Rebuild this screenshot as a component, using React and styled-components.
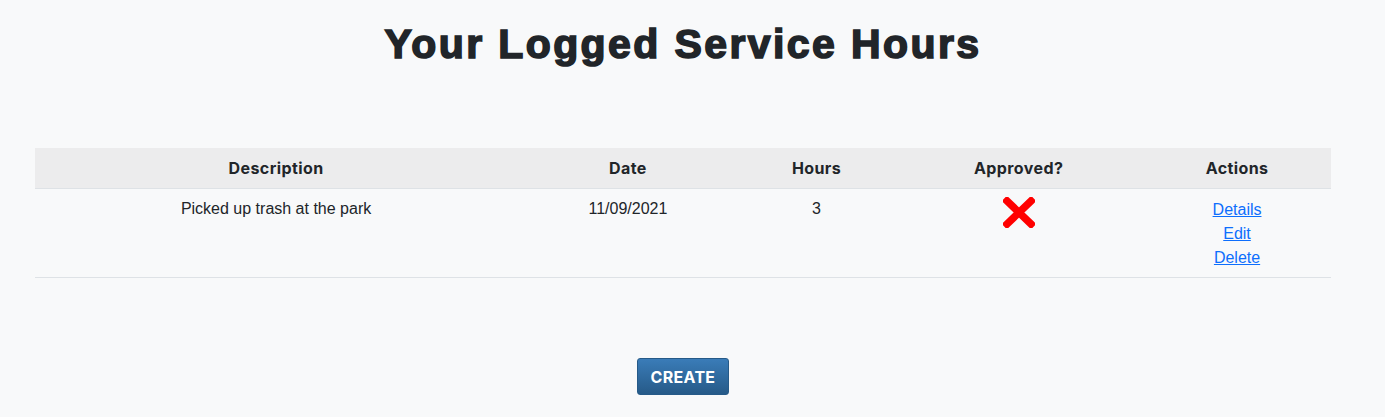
import styled, { createGlobalStyle } from "styled-components"

const GlobalStyle = createGlobalStyle`
body{
  margin:0;
  background:#f8f9fa;
  font-family:"Liberation Sans", Arial, sans-serif;
  color:#212529;
}
`

const rows = [
  { description: "Picked up trash at the park", date: "11/09/2021", hours: 3, approved: false }
]

function CrossIcon(){
  return (
    <svg width="32" height="31" viewBox="0 0 32 31">
      <path d="M4 4 L28 27 M28 4 L4 27" stroke="#ff0000" strokeWidth="7.5" strokeLinecap="square" fill="none"/>
    </svg>
  )
}

export default function App(){
  return(<>
    <GlobalStyle/>
    <Page>
      <Title>Your Logged Service Hours</Title>
      <Table>
        <thead>
          <tr>
            <Th width={37.2}>Description</Th>
            <Th width={17.1}>Date</Th>
            <Th width={12}>Hours</Th>
            <Th width={19.2}>Approved?</Th>
            <Th width={14.5}>Actions</Th>
          </tr>
        </thead>
        <tbody>
          {rows.map((row,i)=>(
            <tr key={i}>
              <Td>{row.description}</Td>
              <Td>{row.date}</Td>
              <Td>{row.hours}</Td>
              <Td><IconBox>{row.approved ? "✓" : <CrossIcon/>}</IconBox></Td>
              <Td>
                <Links>
                  <ActionLink href="#">Details</ActionLink>
                  <ActionLink href="#">Edit</ActionLink>
                  <ActionLink href="#">Delete</ActionLink>
                </Links>
              </Td>
            </tr>
          ))}
        </tbody>
      </Table>
      <CreateButton>CREATE</CreateButton>
    </Page>
  </>)
}

const Page = styled.div`
display:flex;
flex-direction:column;
align-items:center;
width:1366px;
padding:0 35px;
min-height:417px;
box-sizing:border-box;
`
const Title = styled.h1`
margin:18px 0 0 0;
font-family:"Liberation Sans", Arial, sans-serif;
font-weight:900;
font-size:41px;
line-height:52px;
letter-spacing:2.4px;
color:#212529;
-webkit-text-stroke:1.6px #212529;
`
const Table = styled.table`
margin-top:78px;
width:100%;
border-collapse:collapse;
table-layout:fixed;
`
const Th = styled.th`
box-sizing:border-box;
width:${p=>p.width}%;
background:#ececed;
padding:8px;
font-family:Inter, "Noto Sans", sans-serif;
font-size:16px;
font-weight:700;
letter-spacing:0.4px;
line-height:24px;
text-align:center;
border-bottom:1px solid #dee2e6;
color:#212529;
`
const Td = styled.td`
box-sizing:border-box;
padding:8px;
font-size:16px;
line-height:24px;
text-align:center;
vertical-align:top;
border-bottom:1px solid #dee2e6;
color:#212529;
`
const IconBox = styled.div`
display:flex;
justify-content:center;
height:31px;
`
const Links = styled.div`
display:flex;
flex-direction:column;
align-items:center;
padding-top:1px;
margin-bottom:-1px;
`
const ActionLink = styled.a`
color:#0d6efd;
text-decoration:underline;
font-size:16px;
line-height:24px;
`
const CreateButton = styled.button`
margin-top:80px;
width:92px;
height:37px;
border:1px solid #265a88;
border-radius:3px;
background:linear-gradient(to bottom, #3a7cb8, #265a88);
color:#fff;
font-family:Inter, "Noto Sans", sans-serif;
font-weight:700;
font-size:16px;
letter-spacing:0.3px;
cursor:pointer;
`
